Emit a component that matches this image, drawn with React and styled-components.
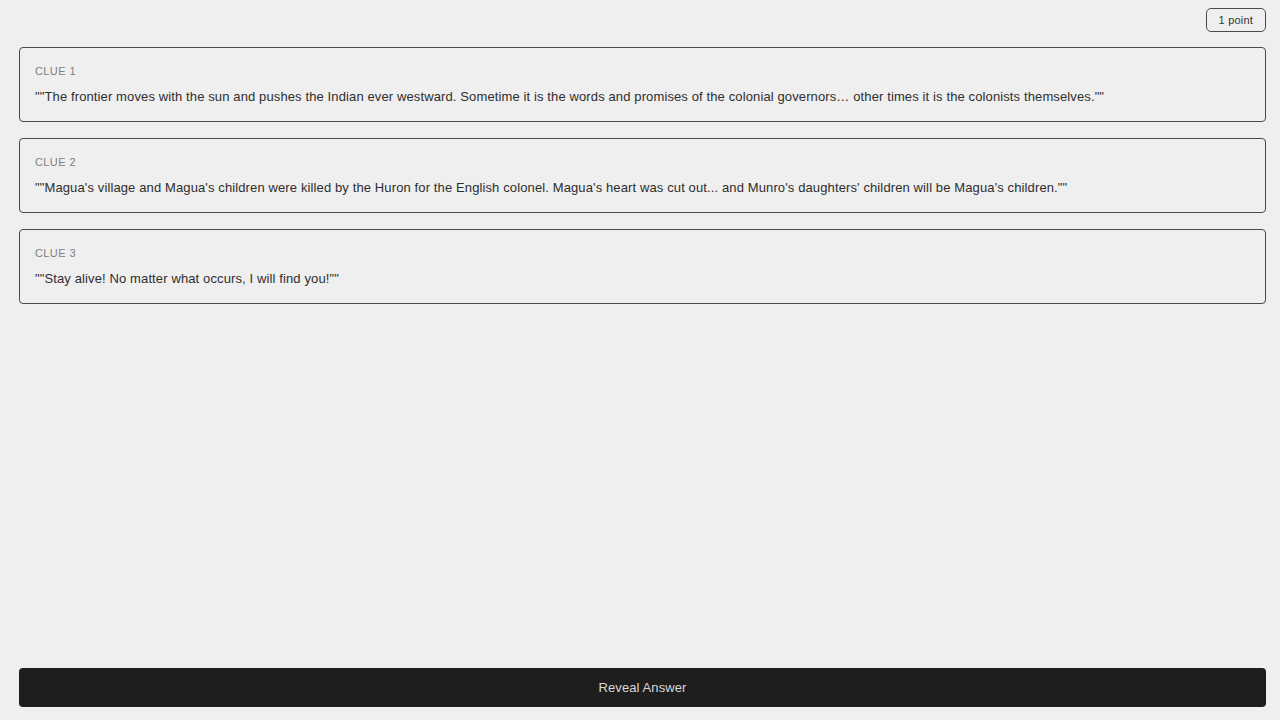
import React from "react";
import styled, { createGlobalStyle } from "styled-components";

const Global = createGlobalStyle`
  html, body { margin: 0; padding: 0; height: 100%; }
  body { background: #efefef; font-family: "Liberation Sans", Arial, sans-serif; }
  #root { height: 100%; }
`;

const Page = styled.div`
  height: 720px;
  box-sizing: border-box;
  padding: 8px 14px 13px 19px;
  display: flex;
  flex-direction: column;
`;

const TopBar = styled.div`
  display: flex;
  justify-content: flex-end;
  margin-bottom: 15px;
`;

const Badge = styled.div`
  height: 24px;
  box-sizing: border-box;
  padding: 0 12px;
  border: 1px solid #4a4a4a;
  border-radius: 5px;
  display: flex;
  align-items: center;
  font-size: 11px;
  letter-spacing: 0.2px;
  color: #333;
`;

const Clues = styled.div`
  display: flex;
  flex-direction: column;
  gap: 16px;
  flex: 1;
`;

const Card = styled.div`
  border: 1px solid #4a4a4a;
  border-radius: 4px;
  padding: 17px 15px 18px;
  height: 75px;
  box-sizing: border-box;
`;

const Label = styled.div`
  font-size: 11px;
  letter-spacing: 0.4px;
  color: #808080;
  line-height: 13px;
  margin-bottom: 11px;
`;

const Quote = styled.div`
  font-size: 13px;
  letter-spacing: 0.12px;
  color: #2e2e2e;
  line-height: 16px;
`;

const Button = styled.button`
  height: 39px;
  width: 100%;
  border: none;
  border-radius: 4px;
  background: #1e1e1e;
  color: #d8d8d8;
  font-family: "Liberation Sans", Arial, sans-serif;
  font-size: 13px;
  letter-spacing: 0.1px;
`;

const clues = [
  "\"\"The frontier moves with the sun and pushes the Indian ever westward. Sometime it is the words and promises of the colonial governors\u2026 other times it is the colonists themselves.\"\"",
  "\"\"Magua's village and Magua's children were killed by the Huron for the English colonel. Magua's heart was cut out... and Munro's daughters' children will be Magua's children.\"\"",
  "\"\"Stay alive! No matter what occurs, I will find you!\"\"",
];

export default function App() {
  return (
    <>
      <Global />
      <Page>
        <TopBar>
          <Badge>1 point</Badge>
        </TopBar>
        <Clues>
          {clues.map((c, i) => (
            <Card key={i}>
              <Label>CLUE {i + 1}</Label>
              <Quote>{c}</Quote>
            </Card>
          ))}
        </Clues>
        <Button>Reveal Answer</Button>
      </Page>
    </>
  );
}
